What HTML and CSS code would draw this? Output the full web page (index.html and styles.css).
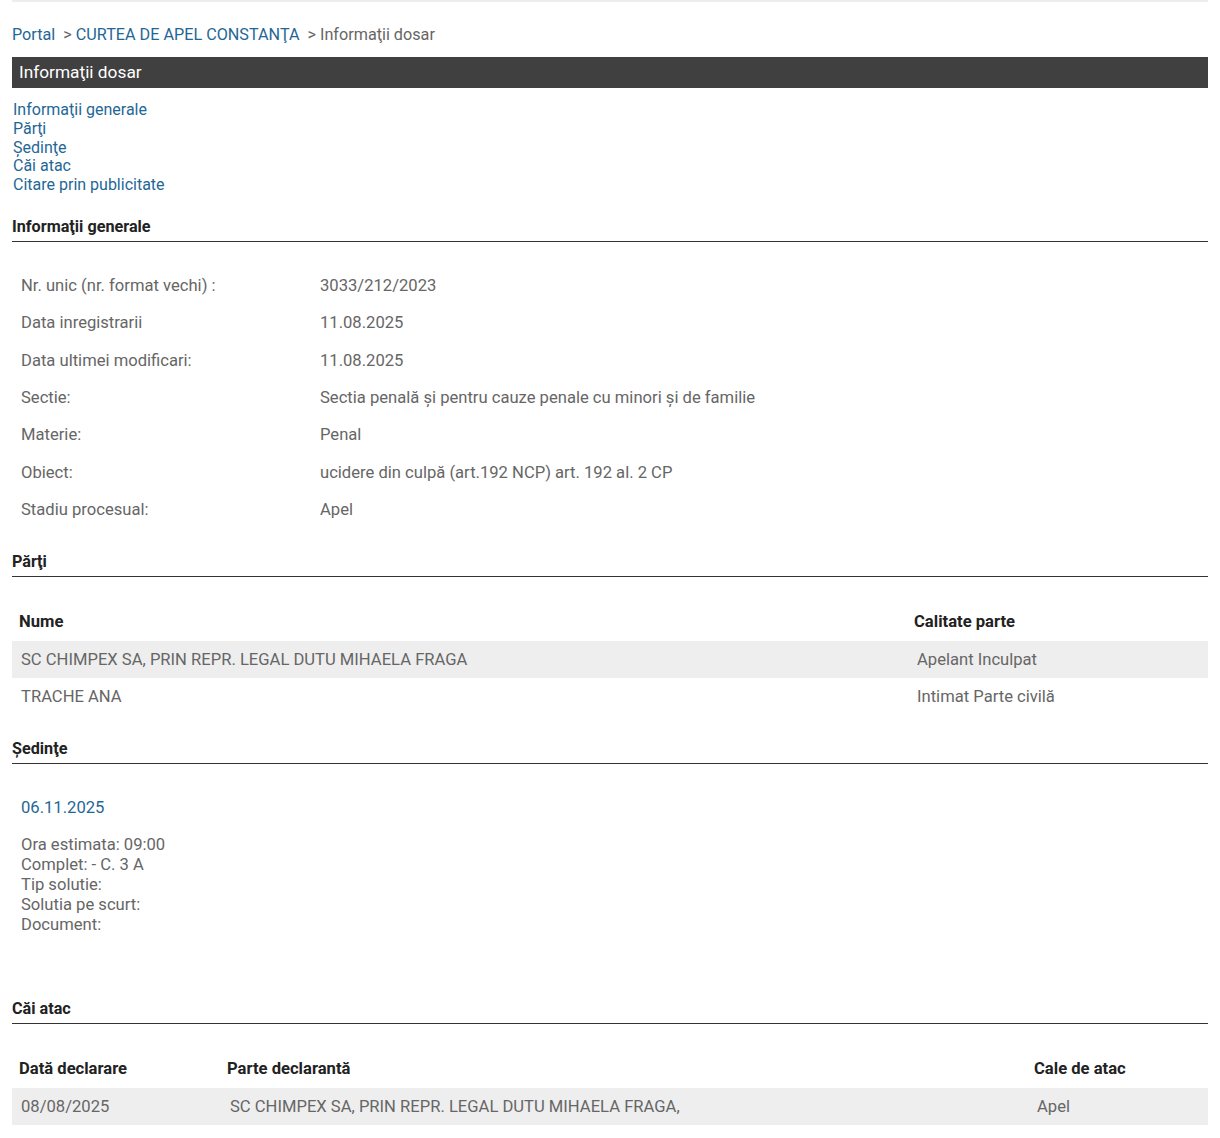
FILE: index.html
```html
<!DOCTYPE html>
<html lang="ro">
<head>
    <meta charset="UTF-8">
    <meta name="viewport" content="width=device-width, initial-scale=1.0">
    <title>Informaţii dosar</title>
    <link rel="stylesheet" href="styles.css">
</head>
<body>
    <div class="page">
        <div class="breadcrumb">
            <a href="#">Portal</a>&nbsp; &gt; <a href="#">CURTEA DE APEL CONSTANŢA</a>&nbsp; &gt; Informaţii dosar
        </div>

        <div class="title-bar">Informaţii dosar</div>

        <ul class="nav-links">
            <li><a href="#generale">Informaţii generale</a></li>
            <li><a href="#parti">Părţi</a></li>
            <li><a href="#sedinte">Şedinţe</a></li>
            <li><a href="#cai">Căi atac</a></li>
            <li><a href="#citare">Citare prin publicitate</a></li>
        </ul>

        <h3 class="section-title" id="generale">Informaţii generale</h3>
        <table class="info-table">
            <tr><td class="label">Nr. unic (nr. format vechi) :</td><td>3033/212/2023</td></tr>
            <tr><td class="label">Data inregistrarii</td><td>11.08.2025</td></tr>
            <tr><td class="label">Data ultimei modificari:</td><td>11.08.2025</td></tr>
            <tr><td class="label">Sectie:</td><td>Sectia penală și pentru cauze penale cu minori și de familie</td></tr>
            <tr><td class="label">Materie:</td><td>Penal</td></tr>
            <tr><td class="label">Obiect:</td><td>ucidere din culpă (art.192 NCP) art. 192 al. 2 CP</td></tr>
            <tr><td class="label">Stadiu procesual:</td><td>Apel</td></tr>
        </table>

        <h3 class="section-title" id="parti">Părţi</h3>
        <table class="data-table">
            <thead>
                <tr><th class="col-parte">Nume</th><th>Calitate parte</th></tr>
            </thead>
            <tbody>
                <tr class="odd"><td>SC CHIMPEX SA, PRIN REPR. LEGAL DUTU MIHAELA FRAGA</td><td>Apelant Inculpat</td></tr>
                <tr><td>TRACHE ANA</td><td>Intimat Parte civilă</td></tr>
            </tbody>
        </table>

        <h3 class="section-title" id="sedinte">Şedinţe</h3>
        <div class="sedinta">
            <div class="sedinta-date">06.11.2025</div>
            <div class="sedinta-info">
                Ora estimata: 09:00<br>
                Complet: - C. 3 A<br>
                Tip solutie:<br>
                Solutia pe scurt:<br>
                Document:
            </div>
        </div>

        <h3 class="section-title" id="cai">Căi atac</h3>
        <table class="data-table">
            <thead>
                <tr><th class="col-data">Dată declarare</th><th class="col-declarant">Parte declarantă</th><th>Cale de atac</th></tr>
            </thead>
            <tbody>
                <tr class="odd"><td>08/08/2025</td><td>SC CHIMPEX SA, PRIN REPR. LEGAL DUTU MIHAELA FRAGA,</td><td>Apel</td></tr>
            </tbody>
        </table>
    </div>
</body>
</html>
```

FILE: styles.css
```css
body {
    margin: 0;
    padding: 0;
    font-family: Roboto, "Liberation Sans", Arial, sans-serif;
    font-size: 16px;
    color: #666;
    background: #fff;
}
a {
    color: #1f6796;
    text-decoration: none;
}
.page {
    margin: 0 12px;
    border-top: 2px solid #ededed;
    padding-top: 23px;
}
.breadcrumb {
    line-height: 19px;
    font-size: 16.2px;
    color: #666;
}
.title-bar {
    margin-top: 13px;
    background: #404040;
    color: #fff;
    font-size: 17.3px;
    line-height: 31px;
    padding: 0 7px;
}
.nav-links {
    list-style: none;
    margin: 13px 0 -1.75px;
    padding: 0 0 0 1px;
    line-height: 18.75px;
}
.section-title {
    margin: 24px 0 0;
    font-size: 16.2px;
    font-weight: bold;
    color: #222;
    line-height: 19px;
    padding-bottom: 5px;
    border-bottom: 1px solid #333;
}
.info-table,
.data-table {
    width: 100%;
    border-collapse: collapse;
    margin-top: 25px;
    font-size: 16.6px;
}
.info-table td {
    height: 37.33px;
    padding: 0 9px;
    vertical-align: middle;
}
.info-table td.label {
    width: 281px;
}
.data-table th {
    text-align: left;
    font-weight: bold;
    color: #222;
    padding: 0 7px;
    height: 39px;
}
.data-table td {
    padding: 0 9px 0 10px;
    height: 37px;
}
.data-table td:first-child {
    padding-left: 9px;
}
.data-table tr.odd td {
    background: #eeeeee;
}
.col-parte {
    width: 881px;
}
.col-data {
    width: 194px;
}
.col-declarant {
    width: 793px;
}
.sedinta {
    padding: 34px 9px 0;
    font-size: 16.6px;
}
.sedinta-date {
    color: #1f6796;
    line-height: 19px;
}
.sedinta-info {
    margin-top: 18px;
    line-height: 20px;
    padding-bottom: 40px;
}
```
